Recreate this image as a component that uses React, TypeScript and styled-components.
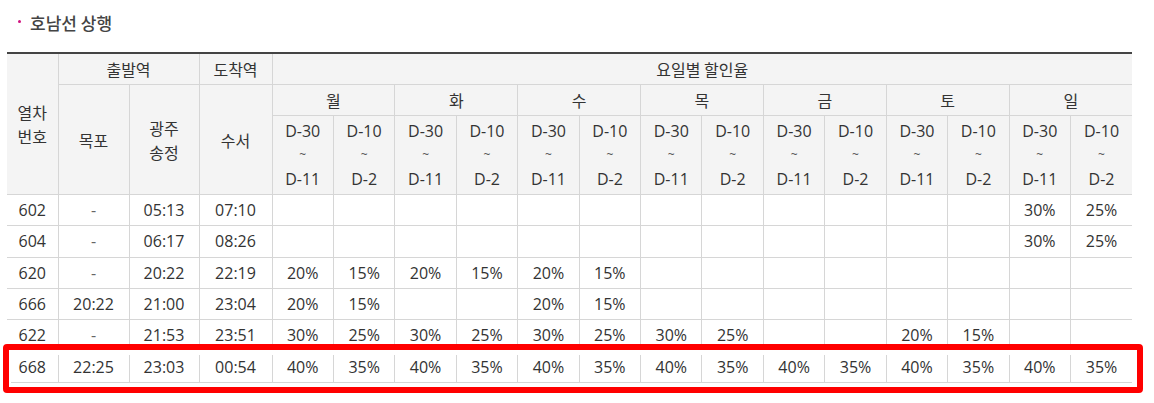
import React from "react";
import styled, { createGlobalStyle } from "styled-components";

const GlobalStyle = createGlobalStyle`
  html, body {
    margin: 0;
    padding: 0;
    background: #fff;
  }
  body {
    font-family: "Open Sans", "Noto Sans CJK KR", sans-serif;
    color: #333;
  }
`;

const days = ["월", "화", "수", "목", "금", "토", "일"];

type Row = {
  no: string;
  mokpo: string;
  gwangju: string;
  suseo: string;
  rates: string[];
};

const pad = (list: string[]) => [...list, ...Array(14 - list.length).fill("")];

const rows: Row[] = [
  { no: "602", mokpo: "-", gwangju: "05:13", suseo: "07:10", rates: [...Array(12).fill(""), "30%", "25%"] },
  { no: "604", mokpo: "-", gwangju: "06:17", suseo: "08:26", rates: [...Array(12).fill(""), "30%", "25%"] },
  { no: "620", mokpo: "-", gwangju: "20:22", suseo: "22:19", rates: pad(["20%", "15%", "20%", "15%", "20%", "15%"]) },
  { no: "666", mokpo: "20:22", gwangju: "21:00", suseo: "23:04", rates: pad(["20%", "15%", "", "", "20%", "15%"]) },
  {
    no: "622",
    mokpo: "-",
    gwangju: "21:53",
    suseo: "23:51",
    rates: pad(["30%", "25%", "30%", "25%", "30%", "25%", "30%", "25%", "", "", "20%", "15%"]),
  },
  {
    no: "668",
    mokpo: "22:25",
    gwangju: "23:03",
    suseo: "00:54",
    rates: Array(7).fill(["40%", "35%"]).flat(),
  },
];

const Range = ({ from, to }: { from: string; to: string }) => (
  <RangeTh>
    <Line>{from}</Line>
    <Line $tilde>~</Line>
    <Line>{to}</Line>
  </RangeTh>
);

export default function App() {
  return (
    <>
      <GlobalStyle />
      <Page>
        <Title>
          <Dot />
          호남선 상행
        </Title>
        <TableWrap>
          <Table>
            <colgroup>
              <col style={{ width: 51 }} />
              <col style={{ width: 71 }} />
              <col style={{ width: 70 }} />
              <col style={{ width: 73 }} />
              {Array.from({ length: 14 }).map((_, i) => (
                <col key={i} />
              ))}
            </colgroup>
            <thead>
              <tr>
                <Th rowSpan={3} $first $stack>
                  열차
                  <br />
                  번호
                </Th>
                <Th colSpan={2}>출발역</Th>
                <Th>도착역</Th>
                <Th colSpan={14}>요일별 할인율</Th>
              </tr>
              <tr>
                <Th rowSpan={2}>목포</Th>
                <Th rowSpan={2} $stack>
                  광주
                  <br />
                  송정
                </Th>
                <Th rowSpan={2}>수서</Th>
                {days.map((d) => (
                  <Th key={d} colSpan={2}>
                    {d}
                  </Th>
                ))}
              </tr>
              <tr>
                {days.map((d) => (
                  <React.Fragment key={d}>
                    <Range from="D-30" to="D-11" />
                    <Range from="D-10" to="D-2" />
                  </React.Fragment>
                ))}
              </tr>
            </thead>
            <tbody>
              {rows.map((r) => (
                <tr key={r.no}>
                  <Td $first>{r.no}</Td>
                  <Td $muted={r.mokpo === "-"}>{r.mokpo}</Td>
                  <Td>{r.gwangju}</Td>
                  <Td>{r.suseo}</Td>
                  {r.rates.map((v, i) => (
                    <Td key={i}>{v}</Td>
                  ))}
                </tr>
              ))}
            </tbody>
          </Table>
          <Highlight />
        </TableWrap>
      </Page>
    </>
  );
}

const Page = styled.div`
  box-sizing: border-box;
  min-height: 403px;
  padding: 10px 0 0 7px;
  width: 1154px;
`;

const Title = styled.h3`
  display: flex;
  align-items: center;
  margin: 0 0 18px 0;
  padding-left: 11px;
  height: 24px;
  font-family: "Noto Sans CJK KR", sans-serif;
  font-size: 17px;
  font-weight: 500;
  color: #444;
`;

const Dot = styled.span`
  width: 3px;
  height: 3px;
  border-radius: 50%;
  background: #d1127f;
  margin-right: 9px;
  margin-top: -1px;
`;

const TableWrap = styled.div`
  position: relative;
  width: 1125px;
`;

const Table = styled.table`
  width: 1125px;
  table-layout: fixed;
  border-collapse: collapse;
  border-top: 2px solid #444;
  font-size: 16px;
`;

const Th = styled.th<{ $first?: boolean; $stack?: boolean }>`
  background: #f4f4f4;
  font-family: "Noto Sans CJK KR", sans-serif;
  font-weight: 400;
  font-size: 16px;
  color: #333;
  text-align: center;
  padding: 4px 0;
  line-height: 22px;
  border: 1px solid #d6d6d6;
  border-top: none;
  ${({ $first }) => ($first ? "border-left: none;" : "")}
  ${({ $stack }) => ($stack ? "line-height: 24px;" : "")}
  tr:first-child > & {
    border-top: 2px solid #444;
  }
  &:last-child {
    border-right: none;
  }
`;

const RangeTh = styled.th`
  background: #f4f4f4;
  font-family: "Open Sans", sans-serif;
  font-weight: 400;
  font-size: 16px;
  color: #333;
  text-align: center;
  padding: 3px 0;
  border: 1px solid #d6d6d6;
  &:last-child {
    border-right: none;
  }
`;

const Line = styled.span<{ $tilde?: boolean }>`
  display: block;
  height: 24px;
  line-height: 24px;
  ${({ $tilde }) => ($tilde ? "font-size: 12px; color: #555;" : "")}
`;

const Td = styled.td<{ $first?: boolean; $muted?: boolean }>`
  text-align: center;
  padding: 5px 0 4px;
  line-height: 21.33px;
  color: ${({ $muted }) => ($muted ? "#666" : "#333")};
  border: 1px solid #d6d6d6;
  ${({ $first }) => ($first ? "border-left: none;" : "")}
  &:last-child {
    border-right: none;
  }
`;

const Highlight = styled.div`
  position: absolute;
  left: -4px;
  top: 292px;
  width: 1140px;
  height: 49px;
  box-sizing: border-box;
  border: 6px solid #f00;
  border-radius: 4px;
  box-shadow: inset 0 5px 0 #fff, inset 0 -4px 0 #fff, inset 2px 0 0 #fff, inset -5px 0 0 #fff;
  pointer-events: none;
`;
